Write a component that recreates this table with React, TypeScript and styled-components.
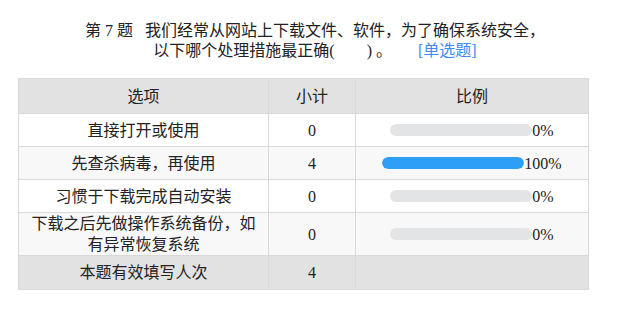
import styled, { createGlobalStyle } from 'styled-components';

const GlobalStyle = createGlobalStyle`
  html, body {
    margin: 0;
    padding: 0;
    background: #fff;
  }
  body {
    font-family: "Liberation Serif", "Noto Sans CJK SC", serif;
    color: #222;
  }
`;

const Page = styled.div`
  width: 620px;
  padding: 21px 0 0 18px;
  box-sizing: border-box;
`;

const Title = styled.div`
  width: 480px;
  margin: 0 0 18px 57px;
  text-align: center;
  font-size: 16px;
  line-height: 19.5px;
`;

const TitleLine = styled.div`
  white-space: nowrap;
`;

const Tag = styled.span`
  color: #3d8af7;
  margin-left: 26px;
`;

const Table = styled.table`
  width: 570px;
  border-collapse: collapse;
  table-layout: fixed;
  font-size: 16px;
  line-height: 21px;
`;

const Row = styled.tr<{ $shade?: 'head' | 'alt' }>`
  background: ${p =>
    p.$shade === 'head' ? '#e2e2e2' : p.$shade === 'alt' ? '#f8f8f8' : '#fff'};
`;

const Cell = styled.td<{ $h?: number }>`
  border: 1px solid #d9d9d9;
  text-align: center;
  vertical-align: middle;
  padding: 0 6px;
  height: ${p => p.$h ?? 32}px;
`;

const BarWrap = styled.div`
  display: flex;
  align-items: center;
  justify-content: center;
`;

const Track = styled.div`
  width: 142px;
  height: 12px;
  border-radius: 6px;
  background: #e3e4e6;
  overflow: hidden;
`;

const Fill = styled.div`
  height: 100%;
  border-radius: 6px;
  background: #2d9ff6;
`;

interface OptionRow {
  label: string;
  count: number;
  percent: number;
}

const rows: OptionRow[] = [
  { label: '直接打开或使用', count: 0, percent: 0 },
  { label: '先查杀病毒，再使用', count: 4, percent: 100 },
  { label: '习惯于下载完成自动安装', count: 0, percent: 0 },
  { label: '下载之后先做操作系统备份，如有异常恢复系统', count: 0, percent: 0 },
];

const App = () => {
  return (
    <Page>
      <GlobalStyle />
      <Title>
        <TitleLine>
          第 7 题&nbsp;&nbsp;&nbsp;我们经常从网站上下载文件、软件，为了确保系统安全，
        </TitleLine>
        <TitleLine>
          以下哪个处理措施最正确(&nbsp;&nbsp;&nbsp;&nbsp;&nbsp;&nbsp;&nbsp;&nbsp;) 。
          <Tag>[单选题]</Tag>
        </TitleLine>
      </Title>
      <Table>
        <colgroup>
          <col style={{ width: 250 }} />
          <col style={{ width: 87 }} />
          <col style={{ width: 233 }} />
        </colgroup>
        <tbody>
          <Row $shade="head">
            <Cell $h={34}>选项</Cell>
            <Cell $h={34}>小计</Cell>
            <Cell $h={34}>比例</Cell>
          </Row>
          {rows.map((r, i) => (
            <Row key={r.label} $shade={i % 2 === 1 ? 'alt' : undefined}>
              <Cell>{r.label}</Cell>
              <Cell>{r.count}</Cell>
              <Cell>
                <BarWrap>
                  <Track>
                    <Fill style={{ width: `${r.percent}%` }} />
                  </Track>
                  {r.percent}%
                </BarWrap>
              </Cell>
            </Row>
          ))}
          <Row $shade="head">
            <Cell $h={33}>本题有效填写人次</Cell>
            <Cell $h={33}>4</Cell>
            <Cell $h={33} />
          </Row>
        </tbody>
      </Table>
    </Page>
  );
};

export default App;
